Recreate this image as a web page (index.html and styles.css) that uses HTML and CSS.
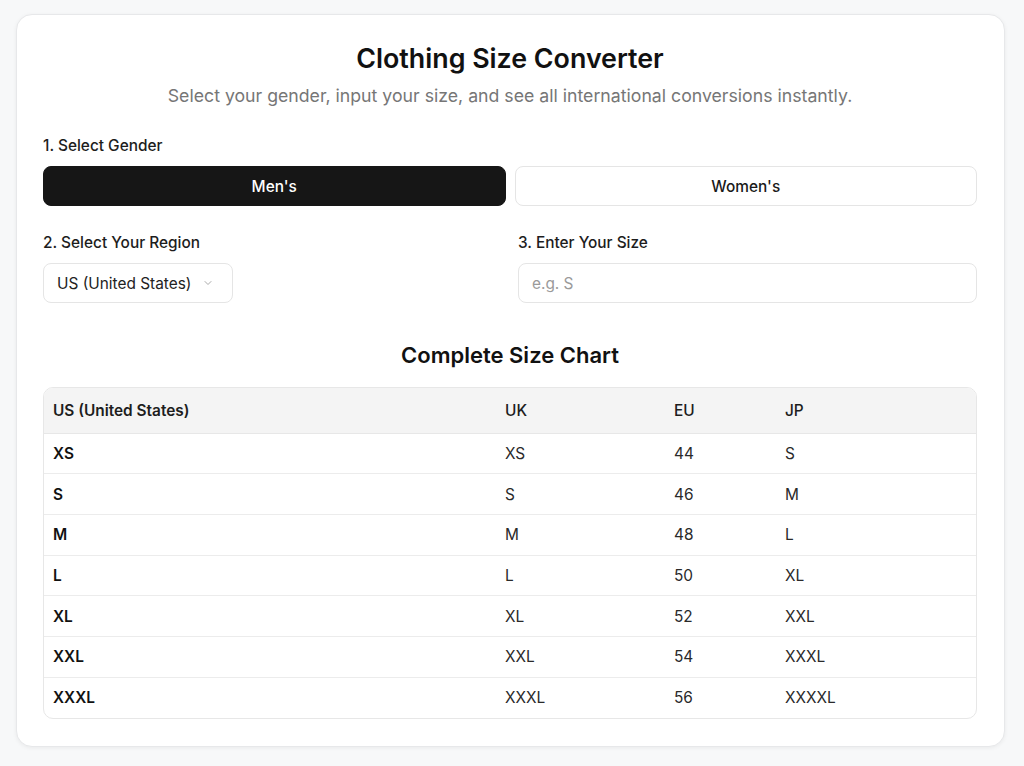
FILE: index.html
```html
<!DOCTYPE html>
<html lang="en">
<head>
    <meta charset="UTF-8">
    <meta name="viewport" content="width=device-width, initial-scale=1.0">
    <link rel="stylesheet" href="styles.css">
    <title>Clothing Size Converter</title>
</head>
<body>
    <div class="card">
        <h1 class="title">Clothing Size Converter</h1>
        <p class="subtitle">Select your gender, input your size, and see all international conversions instantly.</p>

        <div class="field">
            <label class="label">1. Select Gender</label>
            <div class="gender-toggle">
                <button class="gender-btn active">Men's</button>
                <button class="gender-btn">Women's</button>
            </div>
        </div>

        <div class="form-row">
            <div class="field">
                <label class="label" for="region">2. Select Your Region</label>
                <div class="select-wrap">
                    <select id="region" class="select">
                        <option>US (United States)</option>
                        <option>UK</option>
                        <option>EU</option>
                        <option>JP</option>
                    </select>
                    <svg class="chevron" width="12" height="12" viewBox="0 0 24 24" fill="none" stroke="currentColor" stroke-width="2" stroke-linecap="round" stroke-linejoin="round"><path d="M6 9l6 6 6-6"/></svg>
                </div>
            </div>
            <div class="field">
                <label class="label" for="size">3. Enter Your Size</label>
                <input id="size" class="input" type="text" placeholder="e.g. S">
            </div>
        </div>

        <h2 class="chart-title">Complete Size Chart</h2>
        <div class="table-wrap">
            <table class="size-table">
                <thead>
                    <tr>
                        <th class="col-us">US (United States)</th>
                        <th class="col-uk">UK</th>
                        <th class="col-eu">EU</th>
                        <th class="col-jp">JP</th>
                    </tr>
                </thead>
                <tbody>
                    <tr><td>XS</td><td>XS</td><td>44</td><td>S</td></tr>
                    <tr><td>S</td><td>S</td><td>46</td><td>M</td></tr>
                    <tr><td>M</td><td>M</td><td>48</td><td>L</td></tr>
                    <tr><td>L</td><td>L</td><td>50</td><td>XL</td></tr>
                    <tr><td>XL</td><td>XL</td><td>52</td><td>XXL</td></tr>
                    <tr><td>XXL</td><td>XXL</td><td>54</td><td>XXXL</td></tr>
                    <tr><td>XXXL</td><td>XXXL</td><td>56</td><td>XXXXL</td></tr>
                </tbody>
            </table>
        </div>
    </div>
</body>
</html>
```

FILE: styles.css
```css
* {
    box-sizing: border-box;
}

body {
    margin: 0;
    padding: 14px 19px 20px 16px;
    background: #f7f8f9;
    font-family: Inter, "Noto Sans", sans-serif;
    color: #111;
}

.card {
    background: #fff;
    border: 1px solid #e7e8ea;
    border-radius: 16px;
    box-shadow: 0 1px 4px rgba(0, 0, 0, 0.06);
    padding: 25px 27px 27px 26px;
}

.title {
    margin: 0;
    text-align: center;
    font-size: 26.8px;
    font-weight: 600;
    line-height: 36px;
}

.subtitle {
    margin: 8px 0 0;
    text-align: center;
    font-size: 17.7px;
    color: #767676;
    line-height: 24px;
}

.field {
    display: flex;
    flex-direction: column;
}

.label {
    font-size: 15.4px;
    font-weight: 500;
    color: #1d1d1d;
    line-height: 20px;
    margin-bottom: 10px;
}

.subtitle + .field {
    margin-top: 28px;
}

.gender-toggle {
    display: grid;
    grid-template-columns: 1fr 1fr;
    gap: 9px;
}

.gender-btn {
    height: 40px;
    border: 1px solid #e5e5e5;
    border-radius: 8px;
    background: #fff;
    font-family: inherit;
    font-size: 15.4px;
    font-weight: 500;
    color: #1a1a1a;
    cursor: pointer;
}

.gender-btn.active {
    background: #161616;
    border-color: #161616;
    color: #fff;
}

.form-row {
    display: grid;
    grid-template-columns: 1fr 1fr;
    gap: 16px;
    margin-top: 27px;
}

.select-wrap {
    position: relative;
    align-self: flex-start;
}

.select {
    appearance: none;
    height: 40px;
    padding: 0 40px 0 13px;
    border: 1px solid #e5e5e5;
    border-radius: 8px;
    background: #fff;
    font-family: inherit;
    font-size: 15.4px;
    color: #222;
}

.chevron {
    position: absolute;
    right: 19px;
    top: 14px;
    color: #aaa;
    pointer-events: none;
}

.input {
    height: 40px;
    padding: 0 13px;
    border: 1px solid #e5e5e5;
    border-radius: 8px;
    font-family: inherit;
    font-size: 15.4px;
    color: #222;
    outline: none;
}

.input::placeholder {
    color: #9a9a9a;
}

.chart-title {
    margin: 38px 0 0;
    text-align: center;
    font-size: 22px;
    font-weight: 600;
    line-height: 28px;
}

.table-wrap {
    margin-top: 18px;
    border: 1px solid #e7e7e7;
    border-radius: 10px;
    overflow: hidden;
}

.size-table {
    width: 100%;
    border-collapse: collapse;
    font-size: 15.4px;
}

.size-table th {
    background: #f4f4f4;
    height: 45px;
    text-align: left;
    font-weight: 500;
    color: #1d1d1d;
    padding: 0 9px;
    border-bottom: 1px solid #e7e7e7;
}

.size-table th.col-us {
    font-weight: 600;
    width: 452px;
}

.size-table th.col-uk {
    width: 169px;
}

.size-table th.col-eu {
    width: 111px;
}

.size-table td {
    height: 40.7px;
    padding: 0 9px;
    color: #2a2a2a;
    border-bottom: 1px solid #ececec;
}

.size-table tr:last-child td {
    border-bottom: none;
}

.size-table td:first-child {
    font-weight: 600;
    color: #111;
}
```
